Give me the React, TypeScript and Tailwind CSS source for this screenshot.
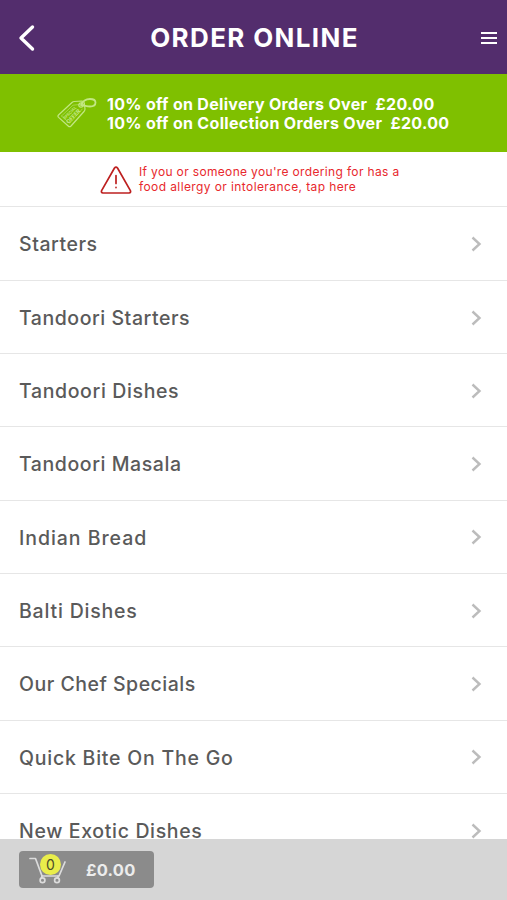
import React from "react";

const categories = [
  { name: "Starters", tracking: "tracking-[0.55px]" },
  { name: "Tandoori Starters", tracking: "tracking-[0.54px]" },
  { name: "Tandoori Dishes", tracking: "tracking-[0.63px]" },
  { name: "Tandoori Masala", tracking: "tracking-[0.57px]" },
  { name: "Indian Bread", tracking: "tracking-[0.95px]" },
  { name: "Balti Dishes", tracking: "tracking-[0.8px]" },
  { name: "Our Chef Specials", tracking: "tracking-[0.5px]" },
  { name: "Quick Bite On The Go", tracking: "tracking-[0.77px]" },
  { name: "New Exotic Dishes", tracking: "tracking-[0.65px]" },
];

const TagIcon = () => (
  <svg width="40" height="32" viewBox="0 0 40 32" fill="none" stroke="#c3e783" strokeWidth="1.2" strokeLinejoin="round" strokeLinecap="round">
    <path d="M1.5 18 L15 5.5 Q16 4.6 17.3 4.5 L25 4 Q27 4 27.3 6 L28 12 Q28 13.5 27 14.5 L14 29 Q12.6 30.4 11.2 29 L1.6 20.4 Q.4 19.2 1.5 18Z" />
    <path d="M4.5 19 L16 8.2 L23 7.5 M25.3 12 L12.7 26.2 L4.5 19" strokeWidth=".8" opacity=".7" />
    <circle cx="24" cy="8" r="2.2" />
    <path d="M24 8 C26 3.5 29 2 33 2 C37 2 38.5 3.5 38.5 5.5 C38.5 8.5 36 9.5 33 9.5 C30 9.5 28 8.5 24 8" strokeWidth="1.8" />
    <g transform="translate(14.5 17.5) rotate(-45)" fill="#c3e783" stroke="none" fontFamily="Inter, sans-serif" fontWeight="700" textAnchor="middle">
      <text y="-1" fontSize="4">SPECIAL</text>
      <text y="4.5" fontSize="5.5">OFFER</text>
    </g>
  </svg>
);

const WarningIcon = () => (
  <svg width="32" height="28" viewBox="0 0 32 28" fill="none" stroke="#bd2020" strokeWidth="1.7" strokeLinejoin="round" strokeLinecap="round">
    <path d="M14.5 2 Q16 .2 17.5 2 L30.4 24.6 Q31.2 26.7 29 27 H3 Q.8 26.7 1.6 24.6Z" />
    <path d="M16 9.5 V17.5 M16 21.4 V21.6" />
  </svg>
);

const CartIcon = () => (
  <svg width="38" height="27" viewBox="0 0 38 27" fill="none" stroke="#dcdcdc" strokeWidth="1.7" strokeLinejoin="round" strokeLinecap="round">
    <path d="M1 1.5 H6.5 L13 19 H30 L36 5" />
    <path d="M13 19 L12.5 21 M29 19 L29 21" />
    <circle cx="13.5" cy="23.2" r="2.4" />
    <circle cx="28" cy="23.2" r="2.4" />
  </svg>
);

const App = () => {
  return (
    <div className="h-[900px] w-full flex flex-col overflow-hidden bg-white font-['Inter',sans-serif]">
      <header className="h-[74px] shrink-0 bg-[#532d6d] flex items-center justify-between pl-[18px] pr-[10px] pt-[2px]">
        <button className="w-[17px]" aria-label="Back">
          <svg width="17" height="28" viewBox="0 0 17 28" fill="none" stroke="white" strokeWidth="3.4" strokeLinecap="round" strokeLinejoin="round">
            <path d="M14.5 3 L3 14 L14.5 25" />
          </svg>
        </button>
        <h1 className="mr-[7px] text-white text-[26px] leading-none font-bold tracking-[1.35px] whitespace-nowrap">ORDER ONLINE</h1>
        <button className="w-4 flex flex-col gap-[3px]" aria-label="Menu">
          <span className="h-[2px] bg-white" />
          <span className="h-[2px] bg-white" />
          <span className="h-[2px] bg-white" />
        </button>
      </header>

      <section className="h-[78px] shrink-0 bg-[#7fc000] flex items-center pl-[57px]">
        <TagIcon />
        <div className="ml-[10px] pt-[1px] text-white text-[16px] leading-[19px] font-bold whitespace-pre">
          <p className="tracking-[0.31px]">10% off on Delivery Orders Over  £20.00</p>
          <p className="tracking-[0.31px]">10% off on Collection Orders Over  £20.00</p>
        </div>
      </section>

      <section className="h-[55px] shrink-0 flex items-center pt-[1px] pl-[100px] border-b border-[#e6e6e6]">
        <WarningIcon />
        <div className="ml-[7px] text-[#e8282d] text-[12px] leading-[14.5px] whitespace-nowrap">
          <p className="tracking-[0.34px]">If you or someone you're ordering for has a</p>
          <p className="tracking-[0.4px]">food allergy or intolerance, tap here</p>
        </div>
      </section>

      <main className="flex-1 min-h-0 overflow-hidden pt-[0.6px]">
        {categories.map(({ name, tracking }) => (
          <div key={name} className="h-[73.3px] flex items-center justify-between pt-[1px] pl-[19px] pr-[25px] border-b border-[#e6e6e6]">
            <span className={`pt-[2px] text-[19.5px] leading-none font-[470] text-[#5a5a5a] whitespace-nowrap ${tracking}`}>{name}</span>
            <svg width="11" height="16" viewBox="0 0 11 16" fill="none" stroke="#bcbcbc" strokeWidth="2.4">
              <path d="M1.5 1.5 L8.5 8 L1.5 14.5" />
            </svg>
          </div>
        ))}
      </main>

      <footer className="h-[61px] shrink-0 bg-[#d6d6d6] pl-[19px] pt-[12px]">
        <button className="relative w-[135px] h-[37px] rounded-[4px] bg-[#8b8b8b] flex items-center pt-[2px] pl-[10px]">
          <CartIcon />
          <span className="absolute left-[21px] top-[3px] w-[21px] h-[21px] rounded-full bg-[#e9ed4b] text-[#4c4c2a] text-[14px] leading-none flex items-center justify-center">0</span>
          <span className="ml-[19px] text-[16.5px] leading-none font-bold text-[#ececec] tracking-[0.2px]">£0.00</span>
        </button>
      </footer>
    </div>
  );
};

export default App;
